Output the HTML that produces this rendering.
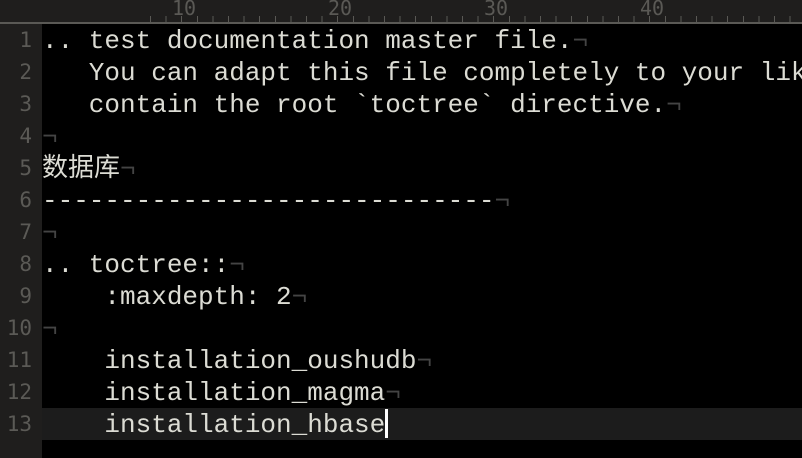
<!DOCTYPE html>
<html><head><style>
body{margin:0;width:802px;height:458px;overflow:hidden;background:#000;position:relative;font-family:"Liberation Mono","Noto Sans CJK SC",monospace}
#ruler{position:absolute;left:0;top:0;width:802px;height:22px;background:#1f1e1d;border-bottom:2px solid #5a5955;overflow:hidden}
.tks{position:absolute;left:150px;bottom:0;width:652px;height:6px;background:repeating-linear-gradient(90deg,#5a5955 0 1px,transparent 1px 15.6px)}
.lab{position:absolute;top:-4px;font-size:20px;color:#5a5955;font-family:"DejaVu Sans Mono",monospace}
#gut{position:absolute;left:0;top:24px;width:42px;height:434px;background:#1f1e1d}
.ln{position:absolute;left:0;width:32px;text-align:right;font-size:21px;color:#5b5a56;font-family:"DejaVu Sans Mono",monospace;line-height:32px}
.l{position:absolute;left:42px;font-size:26px;color:#dcdcd4;white-space:pre;height:32px;line-height:32px;margin-top:1px;width:760px;overflow:hidden}
.p{color:#444}
#hl{position:absolute;left:42px;top:408px;width:760px;height:32px;background:#1c1c1c}
#cur{position:absolute;left:385px;top:409px;width:3px;height:29px;background:#fff}
</style></head><body>
<div id="ruler"><div class="tks"></div>
<div class="lab" style="left:172px">10</div><div class="lab" style="left:328px">20</div><div class="lab" style="left:484px">30</div><div class="lab" style="left:640px">40</div></div>
<div id="gut"></div>
<div id="hl"></div>
<div id="cur"></div>
<div class="ln" style="top:24px">1</div>
<div class="ln" style="top:56px">2</div>
<div class="ln" style="top:88px">3</div>
<div class="ln" style="top:120px">4</div>
<div class="ln" style="top:152px">5</div>
<div class="ln" style="top:184px">6</div>
<div class="ln" style="top:216px">7</div>
<div class="ln" style="top:248px">8</div>
<div class="ln" style="top:280px">9</div>
<div class="ln" style="top:312px">10</div>
<div class="ln" style="top:344px">11</div>
<div class="ln" style="top:376px">12</div>
<div class="ln" style="top:408px">13</div>
<div class="l" style="top:24px">.. test documentation master file.<span class="p">¬</span></div>
<div class="l" style="top:56px">   You can adapt this file completely to your liking</div>
<div class="l" style="top:88px">   contain the root `toctree` directive.<span class="p">¬</span></div>
<div class="l" style="top:120px"><span class="p">¬</span></div>
<div class="l" style="top:152px">数据库<span class="p">¬</span></div>
<div class="l" style="top:184px">-----------------------------<span class="p">¬</span></div>
<div class="l" style="top:216px"><span class="p">¬</span></div>
<div class="l" style="top:248px">.. toctree::<span class="p">¬</span></div>
<div class="l" style="top:280px">    :maxdepth: 2<span class="p">¬</span></div>
<div class="l" style="top:312px"><span class="p">¬</span></div>
<div class="l" style="top:344px">    installation_oushudb<span class="p">¬</span></div>
<div class="l" style="top:376px">    installation_magma<span class="p">¬</span></div>
<div class="l" style="top:408px">    installation_hbase</div>
</body></html>
